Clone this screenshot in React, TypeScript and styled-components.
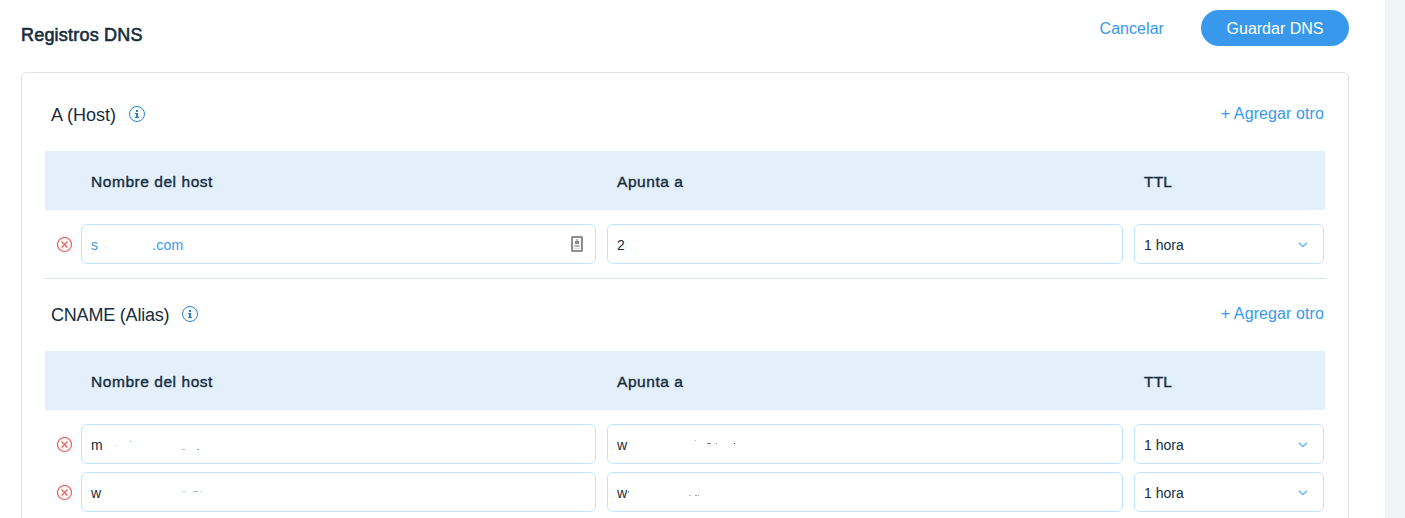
import React from 'react';
import styled, { createGlobalStyle } from 'styled-components';

const GlobalStyle = createGlobalStyle`
  *, *::before, *::after { box-sizing: border-box; }
  html, body { margin: 0; height: 518px; overflow: hidden; background: #fff; }
  body { font-family: 'Liberation Sans', Arial, sans-serif; color: #162d3d; }
  button { font-family: inherit; margin: 0; padding: 0; border: 0; background: none; cursor: pointer; }
`;

const Page = styled.div`
  display: flex;
  width: 1405px;
  height: 518px;
  overflow: hidden;
`;

const Content = styled.main`
  width: 1385px;
  padding: 10px 36px 0 21px;
`;

const SideStrip = styled.aside`
  width: 20px;
  background: #eff4f7;
`;

const TopBar = styled.header`
  display: flex;
  align-items: flex-start;
  height: 62px;
`;

const PageTitle = styled.h1`
  flex: 1;
  margin: 14px 0 0;
  font-size: 18px;
  line-height: 22px;
  font-weight: 400;
  letter-spacing: 0.2px;
  -webkit-text-stroke: 0.6px currentColor;
`;

const LinkButton = styled.button`
  color: #3899ec;
  font-size: 16px;
  line-height: 38px;
  letter-spacing: 0.05px;
`;

const SaveButton = styled.button`
  width: 148px;
  height: 36px;
  margin-left: 37px;
  padding-top: 2px;
  border-radius: 18px;
  background: #3899ec;
  color: #fff;
  font-size: 16px;
  line-height: 34px;
`;

const Card = styled.section`
  height: 520px;
  padding: 0 22px;
  border: 1px solid #dfe1e3;
  border-radius: 6px;
`;

const Section = styled.div<{ $divided?: boolean }>`
  height: ${p => (p.$divided ? 206 : 260)}px;
  border-bottom: ${p => (p.$divided ? '1px solid #dbe3ee' : 'none')};
`;

const SectionHead = styled.div<{ $first?: boolean }>`
  display: flex;
  align-items: center;
  height: ${p => (p.$first ? 78 : 72)}px;
  padding: ${p => (p.$first ? 6 : 0)}px 2px 2px 7px;
`;

const SectionTitle = styled.h2<{ $spacing: number; $gap: number }>`
  margin: 1px ${p => p.$gap}px 0 0;
  font-size: 18px;
  line-height: 24px;
  font-weight: 400;
  letter-spacing: ${p => p.$spacing}px;
`;

const AddButton = styled(LinkButton)`
  margin-left: auto;
  line-height: 36px;
  letter-spacing: 0.1px;
`;

const HeadRow = styled.div`
  display: grid;
  grid-template-columns: 526px 527px 1fr;
  align-items: center;
  height: 59px;
  margin: 0 1px 14px;
  padding: 2px 0 0 46px;
  background: #e3effb;
`;

const HeadCell = styled.span<{ $spacing?: number }>`
  font-size: 15.5px;
  line-height: 20px;
  letter-spacing: ${p => p.$spacing ?? 0.55}px;
  -webkit-text-stroke: 0.4px currentColor;
`;

const Row = styled.div`
  display: grid;
  grid-template-columns: 26px 515px 516px 190px;
  column-gap: 11px;
  align-items: center;
  margin-bottom: 8px;
`;

const DeleteButton = styled.button`
  display: flex;
  justify-content: flex-end;
  width: 29px;
  height: 17px;
  padding-top: 1px;
`;

const Field = styled.div<{ $link?: boolean }>`
  display: flex;
  align-items: center;
  height: 40px;
  padding: 2px 13px 0 9px;
  border: 1px solid #c1e4fe;
  border-radius: 6px;
  color: ${p => (p.$link ? '#3899ec' : '#162d3d')};
  font-size: 14px;
  line-height: 20px;
`;

const Domain = styled.span`
  letter-spacing: 0.25px;
`;

const FieldIcon = styled.span`
  display: flex;
  margin: -3px -1px 0 auto;
`;

const Chevron = styled.span`
  display: flex;
  margin: 0 2px 0 auto;
`;

type Mark = { x: number; y: number; w?: number; color: string };

/* Leftover flecks of redacted values, measured from the first letter. */
const Redacted = ({ width, marks }: { width: number; marks: Mark[] }) => (
  <svg width={width} height="24" viewBox={`0 0 ${width} 24`} shapeRendering="crispEdges">
    {marks.map((m, i) => (
      <rect key={i} x={m.x} y={m.y} width={m.w ?? 1} height="1" fill={m.color} />
    ))}
  </svg>
);

const InfoIcon = () => (
  <svg width="16" height="16" viewBox="0 0 16 16" fill="none">
    <circle cx="8" cy="8" r="7.5" stroke="#2b81cb" />
    <path d="M7 4h2v2H7zM6 7h3v4h1v1H6v-1h1V8H6z" fill="#2b81cb" />
  </svg>
);

const DeleteIcon = () => (
  <svg width="16" height="16" viewBox="0 0 16 16" fill="none" stroke="#ee5951">
    <circle cx="7.500" cy="7.500" r="7" strokeWidth="1.15" />
    <path d="M4.500 4.500l6 6M10.500 4.500l-6 6" strokeWidth="1.15" />
  </svg>
);

const AutofillIcon = () => (
  <svg width="12" height="16" viewBox="0 0 12 16">
    <rect x="1" y="1" width="10" height="14" rx="0.5" fill="#fafafa" stroke="#8e8e8e" strokeWidth="2" />
    <path d="M5.500 3h1v2H8v3H4V5h1.500z" fill="#888" />
    <path d="M3.500 9h5v2h-5z" fill="#b5b5b5" />
    <path d="M3 12h6v1H3z" fill="#ddd" />
  </svg>
);

const ChevronIcon = () => (
  <svg width="10" height="6" viewBox="0 0 10 6" fill="none">
    <path d="M1 .8l4 3.700L9 .8" stroke="#65b2f2" strokeWidth="1.4" />
  </svg>
);

const TtlSelect = () => (
  <Field role="combobox">
    1 hora
    <Chevron><ChevronIcon /></Chevron>
  </Field>
);

type RecordRowProps = { host: React.ReactNode; target: React.ReactNode; link?: boolean };

const RecordRow = ({ host, target, link }: RecordRowProps) => (
  <Row>
    <DeleteButton aria-label="Eliminar"><DeleteIcon /></DeleteButton>
    <Field $link={link}>{host}</Field>
    <Field>{target}</Field>
    <TtlSelect />
  </Row>
);

type RecordSectionProps = {
  title: string;
  spacing: number;
  gap: number;
  first?: boolean;
  children: React.ReactNode;
};

const RecordSection = ({ title, spacing, gap, first, children }: RecordSectionProps) => (
  <Section $divided={first}>
    <SectionHead $first={first}>
      <SectionTitle $spacing={spacing} $gap={gap}>{title}</SectionTitle>
      <InfoIcon />
      <AddButton>+ Agregar otro</AddButton>
    </SectionHead>
    <HeadRow>
      <HeadCell>Nombre del host</HeadCell>
      <HeadCell>Apunta a</HeadCell>
      <HeadCell $spacing={0.2}>TTL</HeadCell>
    </HeadRow>
    {children}
  </Section>
);

export default function App() {
  return (
    <>
      <GlobalStyle />
      <Page>
        <Content>
          <TopBar>
            <PageTitle>Registros DNS</PageTitle>
            <LinkButton>Cancelar</LinkButton>
            <SaveButton>Guardar DNS</SaveButton>
          </TopBar>
          <Card>
            <RecordSection title="A (Host)" spacing={0} gap={13} first>
              <RecordRow
                link
                host={
                  <>
                    s
                    <Redacted width={54} marks={[{ x: 8, y: 14, color: '#c9cdf8' }, { x: 8, y: 15, color: '#e3e5fc' }]} />
                    <Domain>.com</Domain>
                    <FieldIcon><AutofillIcon /></FieldIcon>
                  </>
                }
                target={<>2<Redacted width={20} marks={[{ x: 0, y: 14, color: '#f5c9a0' }, { x: 13, y: 7, color: '#fbdcc4' }]} /></>}
              />
            </RecordSection>
            <RecordSection title="CNAME (Alias)" spacing={-0.2} gap={13}>
              <RecordRow
                host={
                  <>
                    m
                    <Redacted
                      width={110}
                      marks={[
                        { x: 11, y: 12, w: 3, color: '#e6e6e6' },
                        { x: 27, y: 8, color: '#7fb2dc' },
                        { x: 79, y: 16, w: 3, color: '#8fbbe0' },
                        { x: 94, y: 16, w: 2, color: '#75a9d6' },
                      ]}
                    />
                  </>
                }
                target={
                  <>
                    w
                    <Redacted
                      width={120}
                      marks={[
                        { x: 68, y: 7, color: '#8cc4d6' },
                        { x: 80, y: 10, w: 4, color: '#7b8794' },
                        { x: 89, y: 10, color: '#8a8fae' },
                        { x: 107, y: 10, color: '#3c4c5c' },
                      ]}
                    />
                  </>
                }
              />
              <RecordRow
                host={
                  <>
                    w
                    <Redacted
                      width={110}
                      marks={[
                        { x: 81, y: 10, w: 4, color: '#c3dcef' },
                        { x: 92, y: 10, w: 5, color: '#91bee3' },
                        { x: 99, y: 10, w: 2, color: '#c3dcef' },
                      ]}
                    />
                  </>
                }
                target={
                  <>
                    w
                    <Redacted
                      width={120}
                      marks={[
                        { x: 1, y: 10, color: '#6f7b87' },
                        { x: 1, y: 11, color: '#a9b2ba' },
                        { x: 62, y: 14, w: 2, color: '#c4c4c4' },
                        { x: 68, y: 14, w: 2, color: '#9aa6b8' },
                        { x: 71, y: 14, color: '#a8968c' },
                      ]}
                    />
                  </>
                }
              />
            </RecordSection>
          </Card>
        </Content>
        <SideStrip />
      </Page>
    </>
  );
}
